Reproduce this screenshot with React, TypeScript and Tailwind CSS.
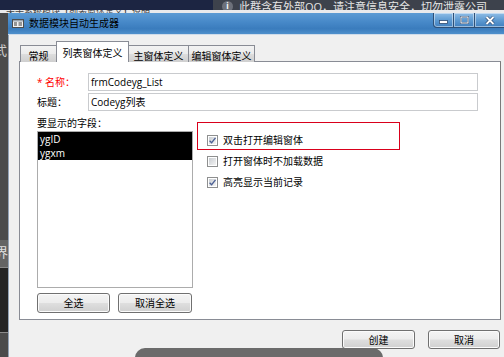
import type { ReactNode } from 'react';

function Win7Button({ children, className }: { children: ReactNode; className: string }) {
    return (
        <div
            className={`flex items-center justify-center rounded-[3px] border border-[#707070] bg-[linear-gradient(180deg,#f4f4f4_0%,#ececec_48%,#dedede_52%,#d0d0d0_100%)] text-[10px] leading-none shadow-[inset_0_0_0_1px_#fbfbfb] ${className}`}
        >
            {children}
        </div>
    );
}

function CheckRow({ checked, label }: { checked: boolean; label: string }) {
    return (
        <div className="flex h-[14px] items-center gap-[5px]">
            <span className="flex h-[11px] w-[11px] items-center justify-center border border-[#8e8f8f] bg-white">
                <span className="relative h-[7px] w-[7px] bg-[linear-gradient(135deg,#c9cdd2_0%,#f4f4f4_100%)]">
                    {checked && (
                        <svg viewBox="0 0 9 9" className="absolute -left-[1px] -top-[1px] h-[9px] w-[9px]">
                            <path d="M1.6 4.7 L3.6 6.7 L7.5 1.8" fill="none" stroke="#4a5f94" strokeWidth="1.3" />
                        </svg>
                    )}
                </span>
            </span>
            <span className="leading-none">{label}</span>
        </div>
    );
}

function Tab({ label, active, className }: { label: string; active?: boolean; className: string }) {
    if (active) {
        return (
            <div className={`relative z-10 -ml-px flex h-[21px] items-start justify-center border border-b-0 border-[#898c95] bg-white pt-[4px] ${className}`}>
                {label}
            </div>
        );
    }
    return (
        <div className={`-ml-px flex h-[17px] items-start justify-center border border-b-0 border-[#898c95] bg-[linear-gradient(180deg,#f3f3f3_0%,#ebebeb_50%,#dddddd_51%,#cfcfcf_100%)] pt-[3px] ${className}`}>
            {label}
        </div>
    );
}

function TitleBar() {
    return (
        <div className="flex h-[22px] items-start border-b border-[#cfdcea] bg-[linear-gradient(180deg,#5c9bd4_0%,#4688c8_45%,#3a7cbd_75%,#4f90cc_100%)]">
            <div className="flex h-full items-center pl-[4px]">
                <svg viewBox="0 0 12 9" className="h-[9px] w-[12px]">
                    <rect x="0.5" y="0.5" width="11" height="8" fill="#f2f2f2" stroke="#4d4d4d" />
                    <rect x="1" y="1" width="10" height="1.5" fill="#9aa3ad" />
                    <path d="M2 4 H5 M2 6 H5 M6.5 4 H10 M6.5 6 H10" stroke="#3a3a3a" strokeWidth="1" />
                </svg>
                <span className="ml-[5px] text-[10px] text-black">数据模块自动生成器</span>
            </div>
            <div className="ml-[314px] flex">
                <div className="flex h-[15px] w-[21px] items-center justify-center rounded-bl-[4px] border border-t-0 border-[#2e5077] bg-[linear-gradient(180deg,#8fbde6_0%,#5f9bd2_50%,#3f7fbf_100%)] shadow-[inset_0_0_0_1px_rgba(255,255,255,0.45)]">
                    <svg viewBox="0 0 9 6" className="mt-[4px] h-[6px] w-[9px]">
                        <rect x="0.5" y="1.5" width="8" height="3" fill="#ffffff" stroke="#2d4a70" strokeWidth="0.8" />
                    </svg>
                </div>
                <div className="-ml-px flex h-[15px] w-[22px] items-center justify-center border border-t-0 border-[#2e5077] bg-[linear-gradient(180deg,#8fbde6_0%,#5f9bd2_50%,#3f7fbf_100%)] shadow-[inset_0_0_0_1px_rgba(255,255,255,0.45)]">
                    <svg viewBox="0 0 9 8" className="h-[8px] w-[9px]">
                        <rect x="1" y="1" width="7" height="6" fill="none" stroke="#2d4a70" strokeWidth="2" />
                        <rect x="1" y="1" width="7" height="6" fill="none" stroke="#ffffff" strokeWidth="1" />
                    </svg>
                </div>
                <div className="-ml-px flex h-[15px] w-[40px] items-center justify-center border border-t-0 border-[#2e5077] bg-[linear-gradient(180deg,#8fbde6_0%,#5f9bd2_50%,#3f7fbf_100%)] pr-[8px] shadow-[inset_0_0_0_1px_rgba(255,255,255,0.45)]">
                    <svg viewBox="0 0 10 9" className="h-[9px] w-[10px]">
                        <path d="M1.5 1 L8.5 8 M8.5 1 L1.5 8" stroke="#2d4a70" strokeWidth="3.2" />
                        <path d="M1.5 1 L8.5 8 M8.5 1 L1.5 8" stroke="#ffffff" strokeWidth="1.8" />
                    </svg>
                </div>
            </div>
        </div>
    );
}

function TopStrip() {
    return (
        <div className="flex h-[13px] flex-col overflow-hidden">
            <div className="flex h-[10px]">
                <div className="w-[213px] bg-[#1c2542]" />
                <div className="flex flex-1 items-center overflow-hidden whitespace-nowrap bg-[#3d424c] text-[11px] text-[#e6e6e6]">
                    <span className="ml-[9px] mt-[2px] flex h-[11px] w-[11px] shrink-0 items-center justify-center rounded-full bg-[#6d717a] text-[8px] font-bold leading-none text-white">i</span>
                    <span className="ml-[6px] mt-[2px] leading-none">此群含有外部QQ，请注意信息安全，切勿泄露公司</span>
                </div>
            </div>
            <div className="flex h-[3px] bg-[#e9eaec]">
                <div className="h-[3px] w-[213px] overflow-hidden whitespace-nowrap pl-[6px] text-[9px] leading-[3px] text-[#444]">
                    关于系统模块【列表窗体定义】说明
                </div>
            </div>
        </div>
    );
}

function LeftStrip() {
    return (
        <div className="flex h-[344px] w-[8px] shrink-0 flex-col overflow-hidden bg-[#4b4b4b] text-[13px] leading-none text-[#cfcfcf]">
            <div className="h-[227px] pt-[31px]">
                <span className="-ml-[6px] block">式</span>
            </div>
            <div className="h-[27px] bg-[#646464] pt-[6px]">
                <span className="-ml-[5px] block text-[#e0e0e0]">界</span>
            </div>
            <div className="h-[66px] border-y border-[#8a8a8a] bg-[#252525]" />
        </div>
    );
}

function ListTab() {
    return (
        <div className="-mt-px h-[259px] border border-[#898c95] border-r-[#7a7a7a] bg-white pl-[17px] pt-[11px]">
            <div className="flex h-[18px] items-center">
                <span className="w-[51px] text-[#ff0000]">* 名称：</span>
                <div className="flex h-[18px] w-[390px] items-center border border-[#c9cbce] pl-[2px] text-black">frmCodeyg_List</div>
            </div>
            <div className="mt-[2px] flex h-[18px] items-center">
                <span className="w-[51px]">标题：</span>
                <div className="flex h-[18px] w-[390px] items-center border border-[#c9cbce] pl-[2px] text-black">Codeyg列表</div>
            </div>
            <div className="mt-[4px] flex">
                <div className="flex w-[156px] flex-col">
                    <div className="flex h-[16px] items-center">要显示的字段：</div>
                    <div className="h-[157px] border border-[#acacac] bg-white">
                        <div className="flex h-[14px] items-center bg-black pl-[2px] text-white">ygID</div>
                        <div className="flex h-[14px] items-center bg-black pl-[2px] text-white">ygxm</div>
                    </div>
                    <div className="mt-[5px] flex gap-[8px]">
                        <Win7Button className="h-[20px] w-[73px]">全选</Win7Button>
                        <Win7Button className="h-[20px] w-[74px]">取消全选</Win7Button>
                    </div>
                </div>
                <div className="ml-[4px] flex flex-col">
                    <div className="mt-[7px] h-[28px] w-[203px] border border-[#d9001b] pl-[9px] pt-[10px]">
                        <CheckRow checked label="双击打开编辑窗体" />
                    </div>
                    <div className="mt-[4px] pl-[10px]">
                        <CheckRow checked={false} label="打开窗体时不加载数据" />
                    </div>
                    <div className="mt-[7px] pl-[10px]">
                        <CheckRow checked label="高亮显示当前记录" />
                    </div>
                </div>
            </div>
        </div>
    );
}

export default function App() {
    return (
        <div className="relative h-[357px] w-[504px] overflow-hidden bg-[#474747] font-['Open_Sans','Noto_Sans_CJK_SC',sans-serif] text-[10px] text-black">
            <TopStrip />
            <div className="flex">
                <LeftStrip />
                <div className="flex w-[520px] shrink-0 flex-col">
                    <TitleBar />
                    <div className="h-[322px] border-l border-[#93a3b6] bg-[#f0f0f0] pl-[10px] pt-[6px]">
                        <div className="w-[482px]">
                            <div className="flex h-[21px] items-end pl-[2px]">
                                <Tab label="常规" className="w-[37px]" />
                                <Tab label="列表窗体定义" active className="w-[73px]" />
                                <Tab label="主窗体定义" className="w-[61px]" />
                                <Tab label="编辑窗体定义" className="w-[67px]" />
                            </div>
                            <ListTab />
                            <div className="mt-[10px] flex justify-end gap-[13px] pr-[1px]">
                                <Win7Button className="h-[19px] w-[73px]">创建</Win7Button>
                                <Win7Button className="h-[19px] w-[72px]">取消</Win7Button>
                            </div>
                        </div>
                    </div>
                </div>
            </div>
            <div className="absolute left-[135px] top-[348px] h-[20px] w-[248px] rounded-t-[10px] bg-[#6b6b6b]" />
        </div>
    );
}
